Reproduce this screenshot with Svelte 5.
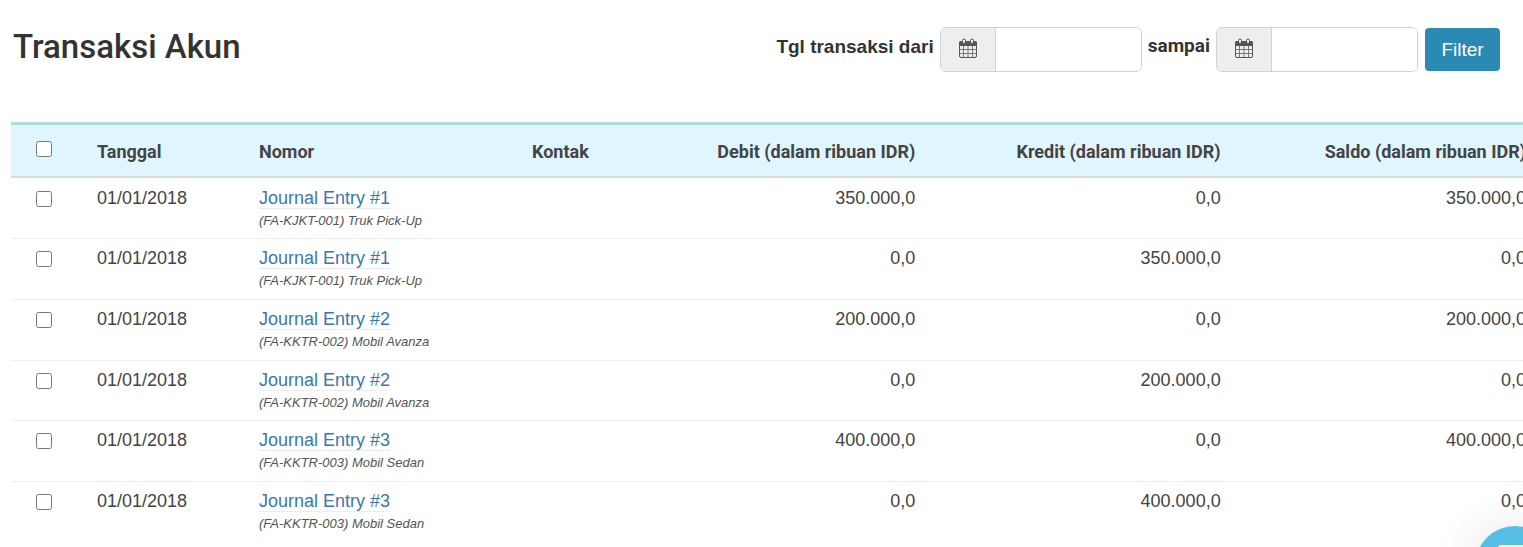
<script lang="ts">
	type Entry = {
		id: number;
		date: string;
		number: string;
		note: string;
		contact: string;
		debit: string;
		credit: string;
		balance: string;
	};

	const entries: Entry[] = [
		{ id: 1, date: '01/01/2018', number: 'Journal Entry #1', note: '(FA-KJKT-001) Truk Pick-Up', contact: '', debit: '350.000,0', credit: '0,0', balance: '350.000,0' },
		{ id: 2, date: '01/01/2018', number: 'Journal Entry #1', note: '(FA-KJKT-001) Truk Pick-Up', contact: '', debit: '0,0', credit: '350.000,0', balance: '0,0' },
		{ id: 3, date: '01/01/2018', number: 'Journal Entry #2', note: '(FA-KKTR-002) Mobil Avanza', contact: '', debit: '200.000,0', credit: '0,0', balance: '200.000,0' },
		{ id: 4, date: '01/01/2018', number: 'Journal Entry #2', note: '(FA-KKTR-002) Mobil Avanza', contact: '', debit: '0,0', credit: '200.000,0', balance: '0,0' },
		{ id: 5, date: '01/01/2018', number: 'Journal Entry #3', note: '(FA-KKTR-003) Mobil Sedan', contact: '', debit: '400.000,0', credit: '0,0', balance: '400.000,0' },
		{ id: 6, date: '01/01/2018', number: 'Journal Entry #3', note: '(FA-KKTR-003) Mobil Sedan', contact: '', debit: '0,0', credit: '400.000,0', balance: '0,0' }
	];

	let dateFrom = $state('');
	let dateTo = $state('');
	let selected = $state<number[]>([]);
	let allSelected = $derived(selected.length === entries.length);

	function toggleAll() {
		selected = allSelected ? [] : entries.map((entry) => entry.id);
	}
</script>

{#snippet calendarIcon()}
	<svg viewBox="0 0 20 20" width="20" height="20" aria-hidden="true">
		<path d="M1 4.5Q1 3 2.5 3H17.5Q19 3 19 4.5V8H1Z" fill="#555" />
		<path
			d="M1.5 6V18Q1.5 19.5 3 19.5H17Q18.5 19.5 18.5 18V6"
			fill="none"
			stroke="#555"
		/>
		<path
			d="M5.5 8V19M10 8V19M14.5 8V19M1.5 11.5H18.5M1.5 15.5H18.5"
			fill="none"
			stroke="#777"
		/>
		<rect x="4.5" y="1" width="3" height="4.5" rx="1.5" fill="#eee" stroke="#555" />
		<rect x="12.5" y="1" width="3" height="4.5" rx="1.5" fill="#eee" stroke="#555" />
	</svg>
{/snippet}

<main class="page">
	<header class="toolbar">
		<h1>Transaksi Akun</h1>
		<form class="filter" onsubmit={(e) => e.preventDefault()}>
			<label for="date-from">Tgl transaksi dari</label>
			<div class="input-group">
				<span class="addon">{@render calendarIcon()}</span>
				<input id="date-from" type="text" bind:value={dateFrom} />
			</div>
			<label class="to-label" for="date-to">sampai</label>
			<div class="input-group">
				<span class="addon">{@render calendarIcon()}</span>
				<input id="date-to" type="text" bind:value={dateTo} />
			</div>
			<button class="filter-button" type="submit">Filter</button>
		</form>
	</header>

	<div class="table-wrap">
		<table>
			<colgroup>
				<col class="col-check" />
				<col class="col-date" />
				<col class="col-number" />
				<col class="col-contact" />
				<col />
				<col />
				<col />
			</colgroup>
			<thead>
				<tr>
					<th class="check">
						<input type="checkbox" aria-label="Pilih semua" checked={allSelected} onchange={toggleAll} />
					</th>
					<th>Tanggal</th>
					<th>Nomor</th>
					<th>Kontak</th>
					<th class="amount">Debit (dalam ribuan IDR)</th>
					<th class="amount">Kredit (dalam ribuan IDR)</th>
					<th class="amount">Saldo (dalam ribuan IDR)</th>
				</tr>
			</thead>
			<tbody>
				{#each entries as entry (entry.id)}
					<tr>
						<td class="check">
							<input type="checkbox" aria-label={entry.number} value={entry.id} bind:group={selected} />
						</td>
						<td>{entry.date}</td>
						<td>
							<a href="#entry-{entry.id}">{entry.number}</a>
							<em class="note">{entry.note}</em>
						</td>
						<td>{entry.contact}</td>
						<td class="amount">{entry.debit}</td>
						<td class="amount">{entry.credit}</td>
						<td class="amount">{entry.balance}</td>
					</tr>
				{/each}
			</tbody>
		</table>
	</div>
</main>

<button class="chat" type="button" aria-label="Chat">
	<svg viewBox="0 0 36 44" width="36" height="44" aria-hidden="true">
		<path d="M4 1H32Q35 1 35 4V32Q35 35 32 35H28V43L19 35H4Q1 35 1 32V4Q1 1 4 1Z" fill="#fff" />
	</svg>
</button>

<style>
	:global(body) {
		overflow: hidden;
		background: #fff;
	}
	.page {
		font-family: 'Liberation Sans', Arial, sans-serif;
		font-size: 18px;
		line-height: 24px;
		color: #444;
	}
	.toolbar {
		display: flex;
		justify-content: space-between;
		align-items: flex-start;
		padding: 27px 23px 50px 13px;
	}
	h1 {
		margin: 0;
		font-family: Roboto, sans-serif;
		font-size: 33px;
		font-weight: 500;
		line-height: 40px;
		color: #333;
	}
	.filter {
		display: flex;
		align-items: flex-start;
		color: #333;
	}
	.filter label {
		margin-right: 6px;
		font-size: 19px;
		font-weight: 700;
		line-height: 40px;
	}
	.filter .to-label {
		margin-left: 6px;
		font-family: Roboto, sans-serif;
		line-height: 38px;
	}
	.input-group {
		display: flex;
		box-sizing: border-box;
		width: 202px;
		height: 45px;
		border: 1px solid #ccd3d6;
		border-radius: 6px;
		overflow: hidden;
	}
	.addon {
		display: flex;
		align-items: center;
		justify-content: center;
		flex: none;
		width: 54px;
		padding-bottom: 4px;
		border-right: 1px solid #ccd3d6;
		background: #eee;
	}
	.input-group input {
		flex: 1;
		min-width: 0;
		padding: 0 12px;
		border: none;
		outline: none;
		font: inherit;
		color: #555;
	}
	.filter-button {
		width: 75px;
		height: 43px;
		margin: 1px 0 0 7px;
		padding: 0;
		border: none;
		border-radius: 4px;
		background: #2b8ab3;
		color: #fff;
		font-family: inherit;
		font-size: 19px;
		cursor: pointer;
	}
	.table-wrap {
		margin-left: 11px;
		overflow: hidden;
	}
	/* last column runs past the right edge */
	table {
		width: calc(100% + 13px);
		table-layout: fixed;
		border-collapse: separate;
		border-spacing: 0;
	}
	.col-check {
		width: 76px;
	}
	.col-date {
		width: 162px;
	}
	.col-number {
		width: 273px;
	}
	.col-contact {
		width: 98px;
	}
	th {
		box-sizing: border-box;
		height: 56px;
		padding: 2px 10px 0;
		border-top: 3px solid #b3d7e5;
		border-bottom: 2px solid #d9dddf;
		background: #e0f6ff;
		font-family: Roboto, sans-serif;
		font-weight: 700;
		text-align: left;
		white-space: nowrap;
	}
	td {
		box-sizing: border-box;
		height: 61px;
		padding: 7px 10px 0;
		border-top: 1px solid #eceeef;
		vertical-align: top;
	}
	tbody tr:nth-child(3n + 1) td {
		height: 60px;
	}
	tbody tr:first-child td {
		border-top-color: transparent;
	}
	.amount {
		text-align: right;
	}
	.check {
		padding-left: 25px;
		line-height: 16px;
	}
	th.check {
		padding-top: 0;
		padding-bottom: 4px;
	}
	td.check {
		padding-top: 12px;
	}
	.check input {
		display: block;
		width: 16px;
		height: 16px;
		margin: 0;
	}
	td a {
		display: inline-block;
		height: 22px;
		border-bottom: 1px dotted #ddd;
		color: #3a77b0;
		text-decoration: none;
	}
	.note {
		display: block;
		font-size: 13px;
		line-height: 22px;
		color: #555;
	}
	.chat {
		position: fixed;
		right: -32px;
		bottom: -59px;
		display: flex;
		align-items: flex-start;
		justify-content: center;
		width: 80px;
		height: 80px;
		padding: 18px 0 0;
		border: none;
		border-radius: 50%;
		background: #56bfe6;
		box-shadow: 0 4px 50px rgba(0, 0, 0, 0.12);
	}
</style>
